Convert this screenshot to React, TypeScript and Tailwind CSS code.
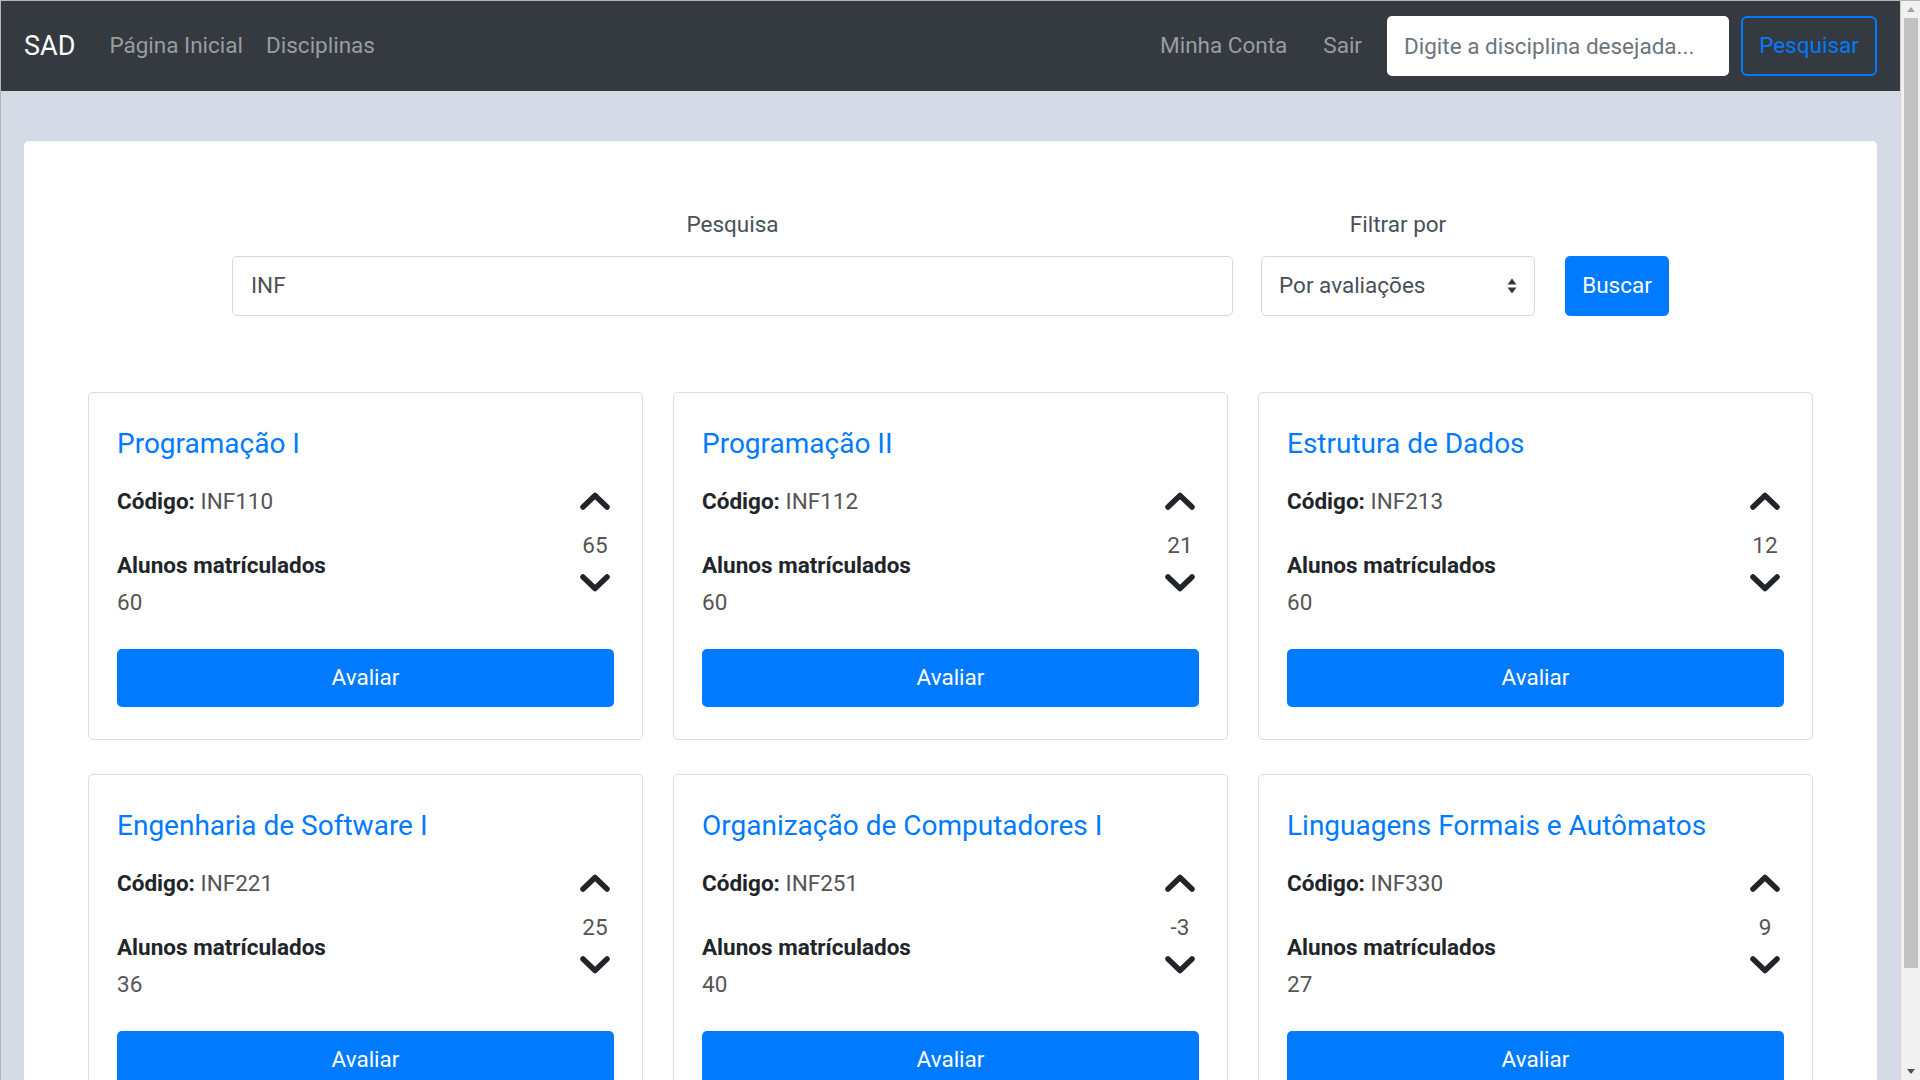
import React from "react";

const DISCIPLINAS = [
  { nome: "Programação I", codigo: "INF110", alunos: 60, votos: 65 },
  { nome: "Programação II", codigo: "INF112", alunos: 60, votos: 21 },
  { nome: "Estrutura de Dados", codigo: "INF213", alunos: 60, votos: 12 },
  { nome: "Engenharia de Software I", codigo: "INF221", alunos: 36, votos: 25 },
  { nome: "Organização de Computadores I", codigo: "INF251", alunos: 40, votos: -3 },
  { nome: "Linguagens Formais e Autômatos", codigo: "INF330", alunos: 27, votos: 9 },
];

function Chevron({ dir }: { dir: "up" | "down" }) {
  return (
    <svg width="32" height="18" viewBox="0 0 32 18" fill="none">
      <polyline
        points={dir === "up" ? "4,15 16,3.5 28,15" : "4,3 16,14.5 28,3"}
        stroke="#212529"
        strokeWidth="5.5"
        strokeLinecap="round"
        strokeLinejoin="round"
      />
    </svg>
  );
}

function Card({ d }: { d: (typeof DISCIPLINAS)[number] }) {
  return (
    <div className="bg-white border border-[#dcdcdc] rounded-[5px] px-[28px] pt-[35px] pb-[32px]">
      {/* Título */}
      <h5 className="text-[28px] leading-[32px] text-[#007bff] whitespace-nowrap">{d.nome}</h5>

      <div className="flex mt-[28px]">
        <div className="flex-1">
          <div className="h-[26px] leading-[26px] text-[22.5px] text-[#555]">
            <span className="font-bold text-[#212529]">Código:</span> {d.codigo}
          </div>
          <div className="mt-[38px] h-[26px] leading-[26px] text-[22.5px] font-bold text-[#212529]">
            Alunos matrículados
          </div>
          <div className="mt-[11px] h-[26px] leading-[26px] text-[22.5px] text-[#555]">{d.alunos}</div>
        </div>
        <div className="w-[38px] flex flex-col items-center">
          <div className="mt-[4px] h-[18px]">
            <Chevron dir="up" />
          </div>
          <div className="mt-[22px] h-[26px] leading-[26px] text-[22.5px] text-[#555]">{d.votos}</div>
          <div className="mt-[16px] h-[18px]">
            <Chevron dir="down" />
          </div>
        </div>
      </div>

      <button className="mt-[34px] w-full h-[58px] rounded-[5px] bg-[#007bff] text-white text-[22.5px]">
        Avaliar
      </button>
    </div>
  );
}

export default function App() {
  return (
    <div className="h-screen w-full flex overflow-hidden font-['Roboto','Liberation_Sans',sans-serif] border-t border-l border-[#b5b5b5]">
      <div className="flex-1 flex flex-col min-w-0">
        {/* Navbar */}
        <nav className="h-[90px] shrink-0 bg-[#343a40] flex items-center px-[23px]">
          <span className="text-[27px] text-white">SAD</span>
          <a className="ml-[34px] text-[22.5px] text-[#9a9da0]">Página Inicial</a>
          <a className="ml-[23px] text-[22.5px] text-[#9a9da0]">Disciplinas</a>
          <div className="ml-auto flex items-center">
            <a className="text-[22.5px] text-[#9a9da0]">Minha Conta</a>
            <a className="ml-[36px] text-[22.5px] text-[#9a9da0]">Sair</a>
            <input
              className="ml-[25px] w-[342px] h-[60px] rounded-[5px] bg-white px-[17px] text-[22.5px] placeholder:text-[#6c757d] outline-none"
              placeholder="Digite a disciplina desejada..."
            />
            <button className="ml-[12px] w-[136px] h-[60px] rounded-[6px] border-2 border-[#007bff] text-[#007bff] text-[22.5px]">
              Pesquisar
            </button>
          </div>
        </nav>

        {/* Conteúdo */}
        <div className="flex-1 bg-[#d4dae6] pt-[50px] px-[23px]">
          <div className="bg-white rounded-[5px] pt-[70px] px-[64px] pb-[40px]">
            <div className="flex justify-center items-end">
              <div className="w-[1001px] flex flex-col items-center">
                <label className="h-[26px] leading-[26px] text-[22.5px] text-[#495057]">Pesquisa</label>
                <div className="mt-[19px] w-full h-[60px] border border-[#d6d9dc] rounded-[5px] flex items-center px-[18px] text-[22.5px] text-[#495057]">
                  INF
                </div>
              </div>
              <div className="ml-[28px] w-[274px] flex flex-col items-center">
                <label className="h-[26px] leading-[26px] text-[22.5px] text-[#495057]">Filtrar por</label>
                <div className="mt-[19px] w-full h-[60px] border border-[#d6d9dc] rounded-[5px] flex items-center justify-between pl-[17px] pr-[17px] text-[22.5px] text-[#495057]">
                  <span>Por avaliações</span>
                  <svg width="10" height="16" viewBox="0 0 10 16">
                    <polygon points="0.5,6.5 5,0.5 9.5,6.5" fill="#343a40" />
                    <polygon points="0.5,9.5 5,15.5 9.5,9.5" fill="#343a40" />
                  </svg>
                </div>
              </div>
              <button className="ml-[30px] w-[104px] h-[60px] rounded-[5px] bg-[#007bff] text-white text-[22.5px]">
                Buscar
              </button>
            </div>

            <div className="mt-[76px] grid grid-cols-3 gap-x-[30px] gap-y-[34px]">
              {DISCIPLINAS.map(d => (
                <Card key={d.codigo} d={d} />
              ))}
            </div>
          </div>
        </div>
      </div>

      {/* Barra de rolagem */}
      <div className="w-[20px] shrink-0 bg-[#f1f1f1] border-l border-[#d0d0d0] flex flex-col items-center">
        <div className="h-[17px] flex items-center justify-center">
          <svg width="8" height="5" viewBox="0 0 8 5">
            <polygon points="0,5 4,0 8,5" fill="#a3a3a3" />
          </svg>
        </div>
        <div className="w-[14px] h-[950px] bg-[#c1c1c1] rounded-[1px]" />
        <div className="flex-1" />
        <div className="h-[17px] flex items-center justify-center">
          <svg width="8" height="5" viewBox="0 0 8 5">
            <polygon points="0,0 4,5 8,0" fill="#505050" />
          </svg>
        </div>
      </div>
    </div>
  );
}
